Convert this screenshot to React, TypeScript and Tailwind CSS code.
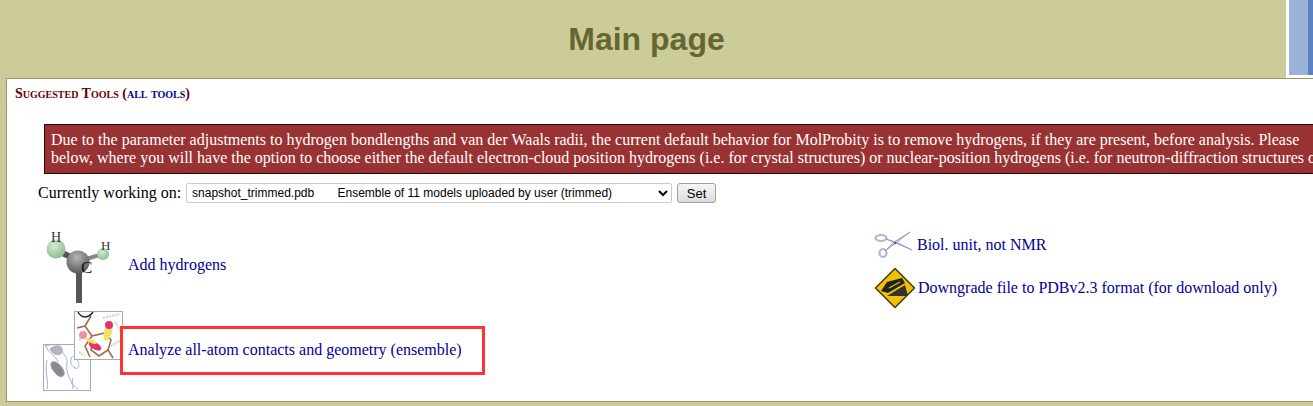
import React from "react";

function MoleculeIcon() {
  return (
    <svg width="80" height="80" viewBox="0 0 80 80" className="block">
      <defs>
        <radialGradient id="hball" cx="40%" cy="35%" r="70%">
          <stop offset="0%" stopColor="#d3ecd3" />
          <stop offset="100%" stopColor="#8ab98f" />
        </radialGradient>
        <radialGradient id="cball" cx="45%" cy="30%" r="70%">
          <stop offset="0%" stopColor="#b5b5b5" />
          <stop offset="100%" stopColor="#5a5a5a" />
        </radialGradient>
      </defs>
      <path d="M36 31 L36 73" stroke="#555" strokeWidth="6" />
      <path d="M13 20 L36 31" stroke="#555" strokeWidth="6" />
      <path d="M36 31 L60 24" stroke="#888" strokeWidth="4" />
      <circle cx="13" cy="19" r="9.5" fill="url(#hball)" />
      <circle cx="60" cy="24" r="6" fill="url(#hball)" />
      <circle cx="35" cy="32" r="11.5" fill="url(#cball)" />
      <text x="8" y="12" fontFamily="Liberation Serif" fontSize="14" fill="#333">H</text>
      <text x="58" y="20" fontFamily="Liberation Serif" fontSize="13" fill="#333">H</text>
      <text x="38" y="43" fontFamily="Liberation Serif" fontSize="17" fill="#111">C</text>
    </svg>
  );
}

function ContactsIcon() {
  return (
    <svg width="82" height="82" viewBox="0 0 82 82" className="block">
      <rect x="0.5" y="34.5" width="47" height="46" fill="#fff" stroke="#aaa" />
      <path d="M2 36 C8 34 16 34 19 38 C18 44 25 46 24 53 C22 66 30 70 30 79 M4 79 C6 70 1 60 4 50 M3 36 C5 44 14 46 15 52" fill="none" stroke="#a3aee0" />
      <path d="M7 39 C12 34 20 36 19 42 C18 46 10 46 7 39 Z" fill="#b5b5b5" stroke="#a3aee0" />
      <path d="M8 53 C11 49 17 54 20 59 C24 66 18 69 14 65 C11 62 7 58 8 53 Z" fill="#8a8a8a" stroke="#a3aee0" />
      <path d="M28 50 C28 44 33 46 34 50 C37 54 36 60 32 58 C29 56 27 54 28 50 Z M30 68 C28 73 31 77 35 79" fill="none" stroke="#a3aee0" />
      <rect x="31.5" y="1.5" width="48" height="48" fill="#fff" stroke="#aaa" />
      <path d="M35 2 C38 8 45 9 50 2" fill="none" stroke="#222" strokeWidth="1.5" />
      <path d="M48 6 L42 16 L34 18 M42 16 L49 26 L42 36 L47 47 M49 26 L62 23 L68 30 L65 40 L70 48 M65 40 L56 46 L48 40 L50 30" fill="none" stroke="#a06a50" strokeWidth="1.6" />
      <path d="M60 8 L76 4 M72 12 L78 22 M36 30 L44 26 M68 36 L78 30 M36 42 L42 46" stroke="#b9e0b0" strokeWidth="2" strokeDasharray="2 1" />
      <ellipse cx="40" cy="25" rx="4" ry="4" fill="#f090a8" />
      <ellipse cx="65" cy="22" rx="4" ry="9" fill="#efe36a" transform="rotate(15 65 22)" />
      <ellipse cx="66" cy="15" rx="4" ry="4" fill="#e83070" />
      <ellipse cx="52" cy="36" rx="7" ry="3.5" fill="#e83070" transform="rotate(30 52 36)" />
      <ellipse cx="48" cy="31" rx="6" ry="2" fill="#efe36a" transform="rotate(25 48 31)" />
    </svg>
  );
}

function ScissorsIcon() {
  return (
    <svg width="40" height="30" viewBox="0 0 40 30" className="block">
      <ellipse cx="7" cy="8" rx="5.5" ry="3" fill="none" stroke="#b4b4d8" strokeWidth="2.2" />
      <ellipse cx="9" cy="23" rx="3.5" ry="4" fill="none" stroke="#b4b4d8" strokeWidth="2.2" />
      <path d="M12 9 L24 14 L38 20 L22 12 Z" fill="#b0b0d0" stroke="#9090b8" strokeWidth="0.8" />
      <path d="M11 21 L22 13 L36 2 L20 12 Z" fill="#c8c8e0" stroke="#9090b8" strokeWidth="0.8" />
      <circle cx="21" cy="13" r="1.2" fill="#667" />
    </svg>
  );
}

function SignIcon() {
  return (
    <svg width="42" height="42" viewBox="0 0 42 42" className="block">
      <path d="M21 1.5 L40.5 21 L21 40.5 L1.5 21 Z" fill="#f2c100" stroke="#4a3d10" strokeWidth="1.6" strokeLinejoin="round" />
      <path d="M7 24 L13 15 L28 11 L31 16 L14 26 Z" fill="#222" />
      <path d="M13 29 L31 18 L34 29 Z" fill="#333" />
      <path d="M15 21 L26 15" stroke="#f2c100" strokeWidth="1.2" />
    </svg>
  );
}

export default function App() {
  const link = "text-[#000099]";
  return (
    <div className="relative h-[406px] overflow-hidden bg-[#cccc99] font-['Liberation_Serif',serif] text-base text-black">
      <div className="absolute right-0 top-0 flex h-[78px] w-[27px] items-start bg-white pl-[3px]">
        <div className="h-[75px] w-[19px] bg-[#9cb3d9]" />
        <div className="h-[75px] w-[5px] bg-[#5b82c4]" />
      </div>

      <h1 className="flex h-[78px] items-center justify-center pr-[20px] font-['Liberation_Sans',sans-serif] text-[32px] font-bold text-[#666633]">
        Main page
      </h1>

      <div className="ml-[6px] h-[324px] w-[1400px] border border-[#999966] bg-white">
        <div className="pl-[8px] pt-[6px] text-[14px] font-bold leading-[17px] text-[#660000] [font-variant:small-caps]">
          Suggested Tools (<a className={link}>all tools</a>)
        </div>

        <div className="ml-[37px] mt-[22px] h-[50px] w-[1320px] whitespace-nowrap border border-[#330000] bg-[#993333] px-[6px] pt-[6px] leading-[18px] text-white">
          <div>Due to the parameter adjustments to hydrogen bondlengths and van der Waals radii, the current default behavior for MolProbity is to remove hydrogens, if they are present, before analysis. Please</div>
          <div>below, where you will have the option to choose either the default electron-cloud position hydrogens (i.e. for crystal structures) or nuclear-position hydrogens (i.e. for neutron-diffraction structures or</div>
        </div>

        <div className="ml-[31px] mt-[8px] flex h-[21px] items-center">
          <span>Currently working on:</span>
          <select className="ml-[5px] h-[20px] w-[486px] rounded-[2px] border border-[#cccccc] bg-white pl-[1px] font-['Liberation_Sans',sans-serif] text-[12px] text-black">
            <option>snapshot_trimmed.pdb&nbsp;&nbsp;&nbsp;&nbsp;&nbsp;&nbsp;&nbsp;Ensemble of 11 models uploaded by user (trimmed)</option>
          </select>
          <button className="ml-[5px] h-[20px] w-[39px] rounded-[3px] border border-[#a0a0a0] bg-gradient-to-b from-[#f6f6f6] to-[#dddddd] font-['Liberation_Sans',sans-serif] text-[13px] text-black">
            Set
          </button>
        </div>

        <div className="mt-[27px] flex">
          <div className="ml-[36px] w-[831px]">
            <div className="flex h-[80px] items-center">
              <MoleculeIcon />
              <a className={`${link} ml-[5px] -translate-y-[5px]`}>Add hydrogens</a>
            </div>
            <div className="flex h-[82px] items-center">
              <ContactsIcon />
              <a className={`${link} ml-[3px] -translate-y-[1px]`}>Analyze all-atom contacts and geometry (ensemble)</a>
            </div>
          </div>
          <div className="flex flex-col">
            <div className="flex h-[30px] items-center">
              <ScissorsIcon />
              <a className={`${link} ml-[3px]`}>Biol. unit, not NMR</a>
            </div>
            <div className="mt-[7px] flex h-[42px] items-center">
              <SignIcon />
              <a className={`${link} ml-[2px]`}>Downgrade file to PDBv2.3 format (for download only)</a>
            </div>
          </div>
        </div>
      </div>

      <div className="absolute left-[120px] top-[326px] h-[49px] w-[365px] border-[3px] border-[#ff3333]" />
    </div>
  );
}
